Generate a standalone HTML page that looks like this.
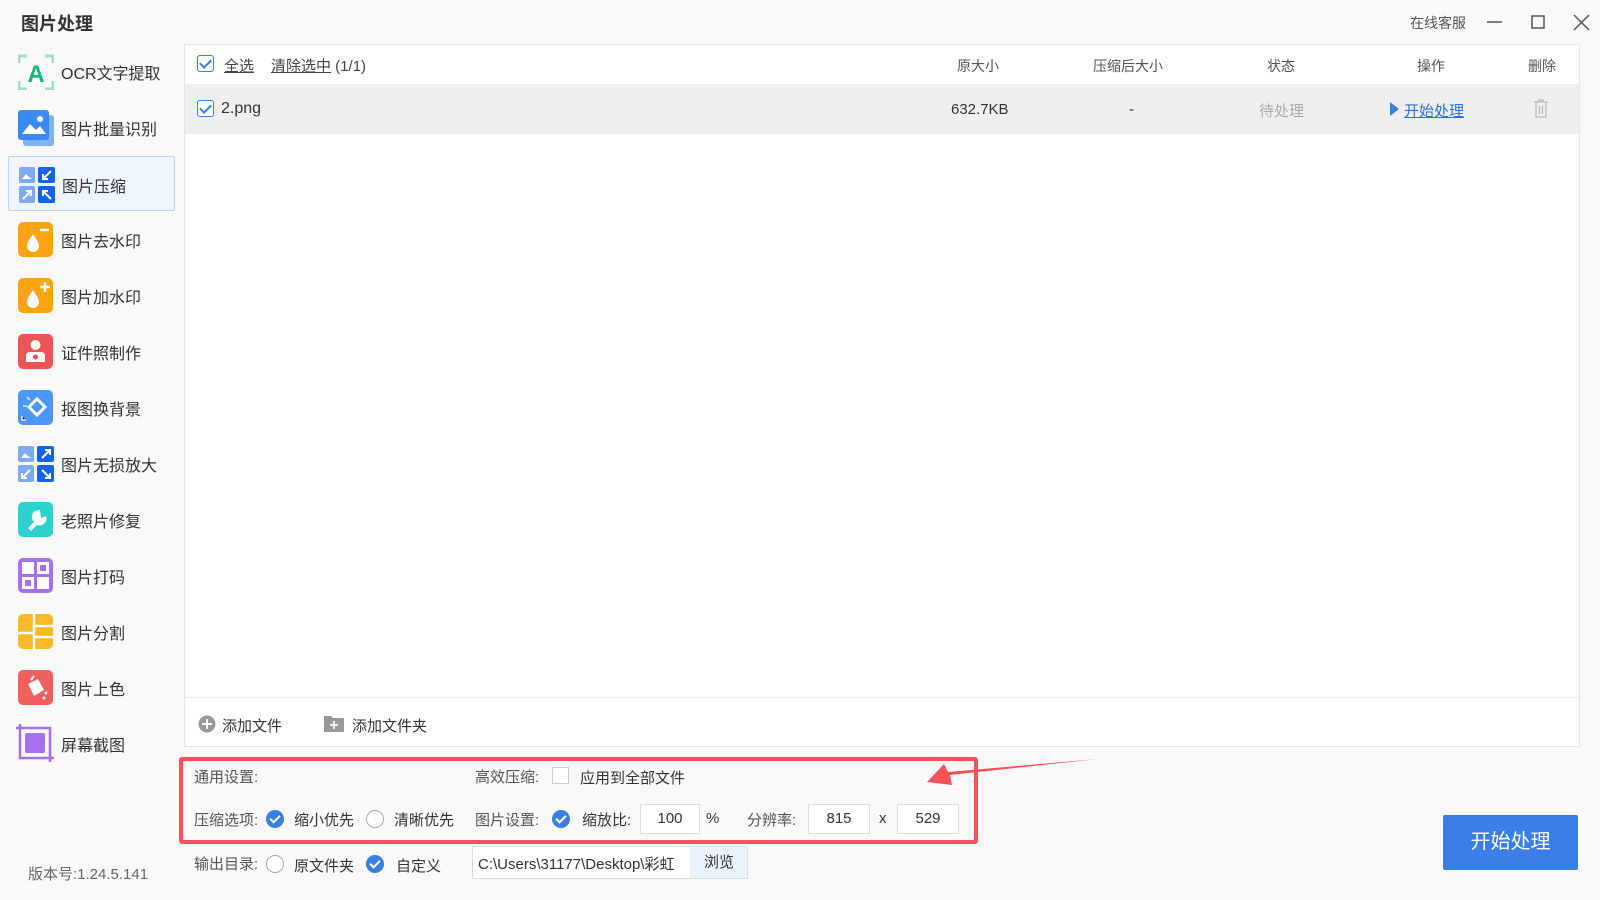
<!DOCTYPE html>
<html><head><meta charset="utf-8"><style>
*{margin:0;padding:0;box-sizing:border-box}
body{width:1600px;height:900px;background:#f9f9f9;font-family:"Liberation Sans","Noto Sans CJK SC",sans-serif;color:#333;position:relative;overflow:hidden}
.a{position:absolute;white-space:nowrap}
.title{left:21px;top:10px;font-size:18px;font-weight:bold;color:#333}
.item{position:absolute;left:8px;width:167px;height:55px}
.item svg{position:absolute;left:10px;top:10px}
.item span{position:absolute;left:53px;top:16px;font-size:16px;color:#333}
.sel{background:#eef5fe;border:1px solid #b9d4f8;border-radius:2px}
.panel{left:184px;top:44px;width:1396px;height:703px;background:#fff;border:1px solid #e6e6e6}
.cb{position:absolute;width:17px;height:17px;border:1.5px solid #3a7ee8;border-radius:3px;background:#fff}
.cb:after{content:"";position:absolute;left:4px;top:1px;width:5px;height:9px;border:solid #3a7ee8;border-width:0 2px 2px 0;transform:rotate(45deg)}
.hd{font-size:14px;color:#555;top:56px}
.rc{position:absolute;width:18px;height:18px;border-radius:50%;background:#3a7ee8}
.rc:after{content:"";position:absolute;left:6px;top:3px;width:4px;height:8px;border:solid #fff;border-width:0 2px 2px 0;transform:rotate(45deg)}
.ro{position:absolute;width:18px;height:18px;border-radius:50%;border:1.5px solid #aaa;background:#fff}
.s{font-size:15px;color:#555}
.t{font-size:15px;color:#333}
.inp{position:absolute;border:1px solid #ddd;background:#fff;font-size:15px;text-align:center;line-height:28px;color:#333}
</style></head><body>
<div class="a title">图片处理</div>
<div class="a" style="left:1410px;top:13px;font-size:14px;color:#555">在线客服</div>
<svg class="a" style="left:1485px;top:14px" width="110" height="18"><path d="M2 8H17" stroke="#555" stroke-width="1.5"/><rect x="47" y="2" width="12" height="12" fill="none" stroke="#555" stroke-width="1.5"/><path d="M89 1L104 16M104 1L89 16" stroke="#555" stroke-width="1.5"/></svg>

<div class="item" style="top:44px"><svg width="36" height="36"><path d="M1 9V2H9M27 2H35V9M35 27V35H27M9 35H1V27" fill="none" stroke="#9fe0c4" stroke-width="3"/><text x="18" y="28" text-anchor="middle" font-size="24" font-weight="bold" fill="#18b87a" font-family="Liberation Sans">A</text></svg><span>OCR文字提取</span></div>
<div class="item" style="top:100px"><svg width="36" height="36"><rect x="5" y="5" width="31" height="31" rx="3" fill="#7fb3fb"/><rect x="0" y="0" width="31" height="30" rx="3" fill="#3a8af5"/><path d="M4 24L12 14L18 20L22 16L28 24Z" fill="#fff"/><circle cx="22" cy="9" r="3" fill="#fff"/></svg><span>图片批量识别</span></div>
<div class="item sel" style="top:156px"><svg width="36" height="36"><rect x="0" y="0" width="16" height="16" rx="2" fill="#7fa8f7"/><rect x="19" y="0" width="17" height="16" rx="2" fill="#1463f0"/><rect x="0" y="19" width="16" height="17" rx="2" fill="#7fa8f7"/><rect x="19" y="19" width="17" height="17" rx="2" fill="#1463f0"/><path d="M3 12L7 7L10 10L13 12Z" fill="#fff"/><path d="M32 4L24 12M24 7V12H29M4 32L12 24M7 24H12V29M24 24L32 32M24 29V24H29" stroke="#fff" stroke-width="2" fill="none"/></svg><span>图片压缩</span></div>
<div class="item" style="top:212px"><svg width="36" height="36"><rect width="35" height="35" rx="5" fill="#fca311"/><path d="M15 12C12 17 9 20 9 24A6 6 0 0 0 21 24C21 20 18 17 15 12Z" fill="#fff"/><path d="M22 8H31" stroke="#fff" stroke-width="2.5"/></svg><span>图片去水印</span></div>
<div class="item" style="top:268px"><svg width="36" height="36"><rect width="35" height="35" rx="5" fill="#fca311"/><path d="M15 12C12 17 9 20 9 24A6 6 0 0 0 21 24C21 20 18 17 15 12Z" fill="#fff"/><path d="M22 9H32M27 4V14" stroke="#fff" stroke-width="2.5"/></svg><span>图片加水印</span></div>
<div class="item" style="top:324px"><svg width="36" height="36"><rect width="35" height="35" rx="5" fill="#ee5453"/><circle cx="17.5" cy="11" r="5" fill="#fff"/><path d="M8 28V22Q8 18 12 18H23Q27 18 27 22V28Z" fill="#fff"/><circle cx="17.5" cy="23" r="2.5" fill="#ee5453"/></svg><span>证件照制作</span></div>
<div class="item" style="top:380px"><svg width="36" height="36"><rect width="35" height="35" rx="5" fill="#4b97f8"/><path d="M11 17L19 9L27 17L19 25Z" fill="none" stroke="#fff" stroke-width="3"/><path d="M5 16H9M9 7L12 10M4 26V30H8" stroke="#bfd9fd" stroke-width="2"/></svg><span>抠图换背景</span></div>
<div class="item" style="top:436px"><svg width="36" height="36"><rect x="0" y="0" width="16" height="16" rx="2" fill="#7fa8f7"/><rect x="19" y="0" width="17" height="16" rx="2" fill="#1463f0"/><rect x="0" y="19" width="16" height="17" rx="2" fill="#7fa8f7"/><rect x="19" y="19" width="17" height="17" rx="2" fill="#1463f0"/><path d="M3 12L7 7L10 10L13 12Z" fill="#fff"/><path d="M24 12L32 4M27 4H32V9M12 24L4 32M4 27V32H9M24 24L32 32M27 32H32V27" stroke="#fff" stroke-width="2" fill="none"/></svg><span>图片无损放大</span></div>
<div class="item" style="top:492px"><svg width="36" height="36"><rect width="35" height="35" rx="5" fill="#2bd2cd"/><path d="M22 8A7 7 0 0 0 16 20L10 26L13 29L19 23A7 7 0 0 0 28 14L23 16Z" fill="#fff"/></svg><span>老照片修复</span></div>
<div class="item" style="top:548px"><svg width="36" height="36"><rect width="35" height="35" rx="5" fill="#a571ee"/><rect x="4" y="4" width="12" height="12" fill="#fff"/><rect x="19" y="4" width="12" height="12" fill="#fff"/><rect x="4" y="19" width="12" height="12" fill="#fff"/><rect x="19" y="19" width="12" height="12" fill="#fff"/><rect x="22" y="7" width="6" height="6" fill="#a571ee"/><rect x="7" y="22" width="6" height="6" fill="#a571ee"/></svg><span>图片打码</span></div>
<div class="item" style="top:604px"><svg width="36" height="36"><rect width="35" height="35" rx="5" fill="#fbb928"/><path d="M16 0V35M16 12H35M16 23H35M0 19H16" stroke="#fff" stroke-width="2.5"/></svg><span>图片分割</span></div>
<div class="item" style="top:660px"><svg width="36" height="36"><rect width="35" height="35" rx="5" fill="#ee5f5e"/><path d="M10 14L20 9L26 20L16 26Z" fill="#fff"/><path d="M13 10L16 6" stroke="#fff" stroke-width="2"/><circle cx="28" cy="23" r="1.5" fill="#fff"/><circle cx="26" cy="28" r="1.5" fill="#fff"/></svg><span>图片上色</span></div>
<div class="item" style="top:716px"><svg width="38" height="38" style="left:8px;top:8px"><path d="M4 0V34H38M0 4H34V38" fill="none" stroke="#a571ee" stroke-width="2.5"/><rect x="9" y="9" width="20" height="20" rx="2" fill="#a571ee"/></svg><span>屏幕截图</span></div>
<div class="a" style="left:28px;top:863px;font-size:15px;color:#666">版本号:1.24.5.141</div>

<div class="a panel"></div>
<div class="a" style="left:185px;top:84px;width:1394px;height:50px;background:#efefef"></div>
<div class="a" style="left:185px;top:697px;width:1394px;height:1px;background:#ebebeb"></div>
<div class="cb" style="left:197px;top:55px"></div>
<div class="a" style="left:224px;top:55px;font-size:15px;color:#444;text-decoration:underline">全选</div>
<div class="a" style="left:271px;top:55px;font-size:15px;color:#444"><u>清除选中</u> (1/1)</div>
<div class="a hd" style="left:957px">原大小</div>
<div class="a hd" style="left:1093px">压缩后大小</div>
<div class="a hd" style="left:1267px">状态</div>
<div class="a hd" style="left:1417px">操作</div>
<div class="a hd" style="left:1528px">删除</div>
<div class="cb" style="left:197px;top:100px"></div>
<div class="a" style="left:221px;top:100px;font-size:16px;color:#333">2.png</div>
<div class="a" style="left:951px;top:101px;font-size:15px;color:#333">632.7KB</div>
<div class="a" style="left:1129px;top:101px;font-size:15px;color:#333">-</div>
<div class="a" style="left:1259px;top:100px;font-size:15px;color:#aaa">待处理</div>
<svg class="a" style="left:1390px;top:102px" width="10" height="14"><path d="M0 0L9 7L0 14Z" fill="#3a7ee8"/></svg>
<div class="a" style="left:1404px;top:100px;font-size:15px;color:#2e6fe0;text-decoration:underline">开始处理</div>
<svg class="a" style="left:1533px;top:99px" width="16" height="19"><path d="M1 3H15M6 3V1H10V3M3 3V18H13V3M6.5 7V15M9.5 7V15" fill="none" stroke="#bbb" stroke-width="1.3"/></svg>

<svg class="a" style="left:198px;top:715px" width="18" height="18"><circle cx="9" cy="9" r="8.5" fill="#999"/><path d="M9 4V14M4 9H14" stroke="#fff" stroke-width="1.8"/></svg>
<div class="a" style="left:222px;top:715px;font-size:15px;color:#333">添加文件</div>
<svg class="a" style="left:324px;top:715px" width="20" height="17"><path d="M0 1H7L9 3H20V17H0Z" fill="#999"/><path d="M10 6V14M6 10H14" stroke="#fff" stroke-width="1.8"/></svg>
<div class="a" style="left:352px;top:715px;font-size:15px;color:#333">添加文件夹</div>

<div class="a" style="left:179px;top:757px;width:799px;height:87px;border:4px solid #f5525a;border-radius:3px"></div>
<div class="a s" style="left:194px;top:766px">通用设置:</div>
<div class="a s" style="left:475px;top:766px">高效压缩:</div>
<div class="a" style="left:552px;top:767px;width:17px;height:17px;border:1px solid #ccc;background:#fff"></div>
<div class="a t" style="left:580px;top:767px">应用到全部文件</div>

<div class="a s" style="left:194px;top:809px">压缩选项:</div>
<div class="rc" style="left:266px;top:810px"></div>
<div class="a t" style="left:294px;top:809px">缩小优先</div>
<div class="ro" style="left:366px;top:810px"></div>
<div class="a t" style="left:394px;top:809px">清晰优先</div>
<div class="a s" style="left:475px;top:809px">图片设置:</div>
<div class="rc" style="left:552px;top:810px"></div>
<div class="a t" style="left:582px;top:809px">缩放比:</div>
<div class="inp" style="left:640px;top:804px;width:60px;height:30px">100</div>
<div class="a t" style="left:706px;top:810px">%</div>
<div class="a s" style="left:747px;top:809px">分辨率:</div>
<div class="inp" style="left:808px;top:804px;width:62px;height:30px">815</div>
<div class="a t" style="left:879px;top:810px">x</div>
<div class="inp" style="left:897px;top:804px;width:62px;height:30px">529</div>

<div class="a s" style="left:194px;top:853px">输出目录:</div>
<div class="ro" style="left:266px;top:855px"></div>
<div class="a t" style="left:294px;top:855px">原文件夹</div>
<div class="rc" style="left:366px;top:855px"></div>
<div class="a t" style="left:396px;top:855px">自定义</div>
<div class="a" style="left:472px;top:846px;width:276px;height:33px;border:1px solid #ddd;background:#fff;overflow:hidden"><span style="position:absolute;left:5px;top:6px;font-size:15px;color:#333;width:205px;overflow:hidden;white-space:nowrap">C:\Users\31177\Desktop\彩虹</span><span style="position:absolute;left:217px;top:0;width:58px;height:31px;background:#eaf2fe;font-size:15px;line-height:31px;text-align:center;color:#333">浏览</span></div>

<svg class="a" style="left:900px;top:745px" width="210" height="50"><path d="M198 14L50 30L52 40L27 37L44 19L48 27Z" fill="#f5525a"/></svg>

<div class="a" style="left:1443px;top:815px;width:135px;height:55px;background:#3a7ee8;border-radius:2px;color:#fff;font-size:20px;text-align:center;line-height:55px">开始处理</div>
</body></html>
